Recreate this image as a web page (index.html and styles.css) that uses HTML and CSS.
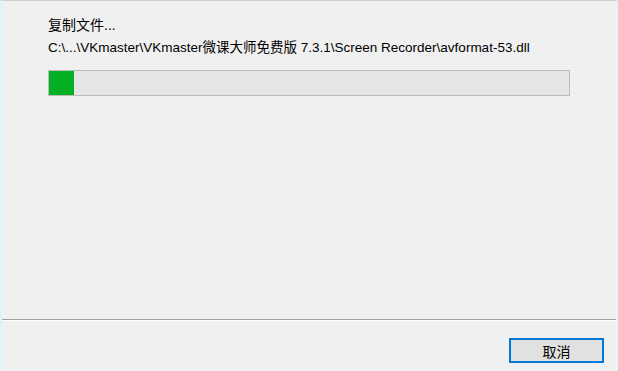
FILE: index.html
```html
<!DOCTYPE html>
<html lang="zh-CN">
<head>
    <meta charset="UTF-8">
    <title>复制文件</title>
    <link rel="stylesheet" href="styles.css">
</head>
<body>
    <div class="window">
        <!-- Progress area -->
        <div class="content">
            <div class="status">复制文件...</div>
            <div class="path">C:\...\VKmaster\VKmaster微课大师免费版 7.3.1\Screen Recorder\avformat-53.dll</div>
            <div class="progress">
                <div class="progress-fill" style="width: 25px;"></div>
            </div>
        </div>

        <!-- Buttons -->
        <div class="footer">
            <button type="button" class="btn-cancel">取消</button>
        </div>
    </div>
</body>
</html>
```

FILE: styles.css
```css
html, body {
    margin: 0;
    padding: 0;
    height: 100%;
}
body {
    background-color: #f0f0f0;
    font-family: "Liberation Sans", "Noto Sans CJK SC", sans-serif;
    font-size: 14px;
    color: #000;
}
.window {
    height: 100%;
    box-sizing: border-box;
    display: flex;
    flex-direction: column;
    border-top: 1px solid #d0d0d0;
    border-left: 2px solid #dff3fb;
    border-right: 2px solid #e6f4fa;
}
.content {
    flex: 1;
    padding: 14px 0 0 46px;
}
.status {
    line-height: 20px;
}
.path {
    font-size: 13.5px;
    line-height: 20px;
    margin-top: 3px;
    white-space: nowrap;
}
.progress {
    width: 520px;
    height: 24px;
    margin-top: 12px;
    background-color: #e6e6e6;
    border: 1px solid #bcbcbc;
}
.progress-fill {
    height: 100%;
    background-color: #06b025;
}
.footer {
    height: 52px;
    border-top: 1px solid #a0a0a0;
    box-shadow: inset 0 1px 0 #ffffff;
    display: flex;
    justify-content: flex-end;
    align-items: flex-start;
    padding: 18px 12px 0 0;
    box-sizing: border-box;
}
.btn-cancel {
    width: 95px;
    height: 25px;
    padding: 0;
    background-color: #e1e1e1;
    border: 2px solid #0078d7;
    font-family: inherit;
    font-size: 14px;
    color: #000;
}
```
